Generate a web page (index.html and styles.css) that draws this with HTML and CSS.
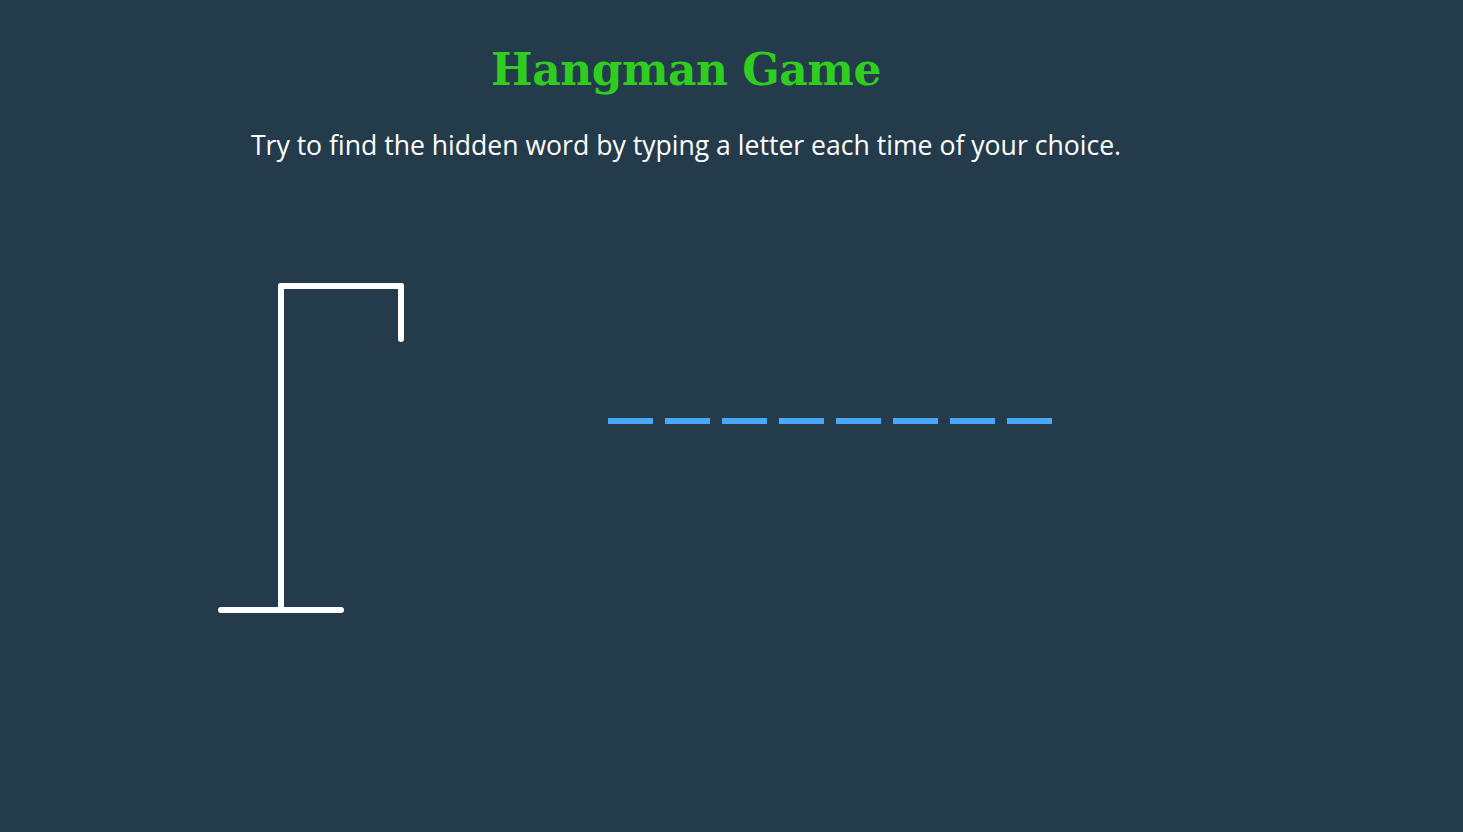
FILE: index.html
```html
<!DOCTYPE html>
<html lang="en">
<head>
<meta charset="utf-8">
<title>Hangman Game</title>
<link rel="stylesheet" href="styles.css">
</head>
<body>
<main class="page">
  <header class="header">
    <h1 class="title">Hangman Game</h1>
    <p class="subtitle">Try to find the hidden word by typing a letter each time of your choice.</p>
  </header>
  <section class="game">
    <svg class="figure" width="210" height="350" viewBox="0 0 210 350">
      <line x1="81" y1="16" x2="201" y2="16"/>
      <line x1="201" y1="16" x2="201" y2="69"/>
      <line x1="81" y1="16" x2="81" y2="340"/>
      <line x1="21" y1="340" x2="141" y2="340"/>
    </svg>
    <div class="word">
      <span class="letter"></span>
      <span class="letter"></span>
      <span class="letter"></span>
      <span class="letter"></span>
      <span class="letter"></span>
      <span class="letter"></span>
      <span class="letter"></span>
      <span class="letter"></span>
    </div>
  </section>
</main>
</body>
</html>
```

FILE: styles.css
```css
html, body {
  margin: 0;
  padding: 0;
  background: #243b4c;
  height: 100%;
}

.page {
  width: 1372px;
  min-height: 832px;
  color: #ffffff;
  font-family: "Open Sans", "Liberation Sans", sans-serif;
}

.header {
  display: flex;
  flex-direction: column;
  align-items: center;
  padding-top: 42px;
}

.title {
  margin: 0;
  font-family: "DejaVu Serif", "Liberation Serif", serif;
  font-weight: bold;
  font-size: 44px;
  line-height: 56px;
  color: #2ecd1f;
  letter-spacing: -0.5px;
}

.subtitle {
  margin: 31px 0 0 0;
  font-size: 26.6px;
  line-height: 32px;
}

.game {
  display: flex;
  align-items: flex-start;
  margin-top: 109px;
  padding-left: 200px;
}

.figure {
  display: block;
  fill: none;
  stroke: #ffffff;
  stroke-width: 6;
  stroke-linecap: round;
}

.word {
  display: flex;
  gap: 12px;
  margin-top: 148px;
  margin-left: 198px;
}

.letter {
  display: block;
  width: 45px;
  height: 6px;
  background: #47a9fd;
}
```
